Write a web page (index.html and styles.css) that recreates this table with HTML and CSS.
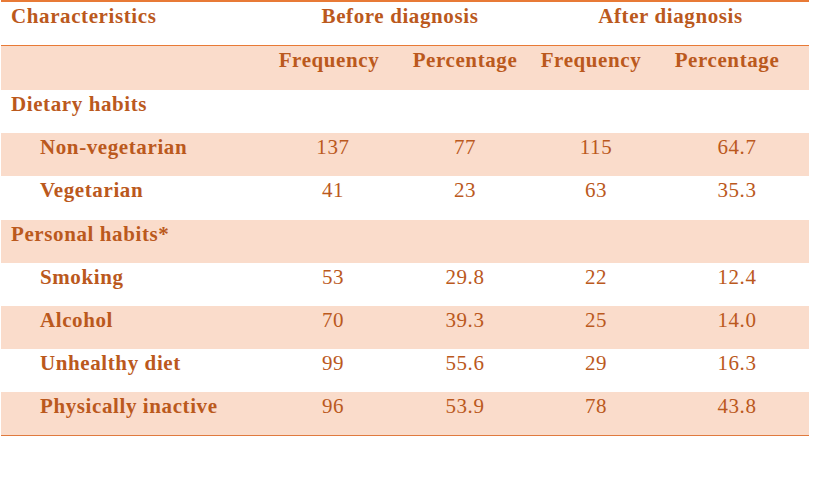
FILE: index.html
```html
<!DOCTYPE html>
<html>
<head>
<meta charset="utf-8">
<link rel="stylesheet" href="styles.css">
</head>
<body>
<div class="wrap">
<table class="tbl">
  <colgroup>
    <col class="c1"><col class="c2"><col class="c3"><col class="c4"><col class="c5">
  </colgroup>
  <tr class="top">
    <th class="lead">Characteristics</th>
    <th colspan="2">Before diagnosis</th>
    <th colspan="2">After diagnosis</th>
  </tr>
  <tr class="sub band r44">
    <th></th>
    <th>Frequency</th>
    <th>Percentage</th>
    <th>Frequency</th>
    <th>Percentage</th>
  </tr>
  <tr class="cat">
    <td colspan="5" class="lead">Dietary habits</td>
  </tr>
  <tr class="band">
    <td class="item">Non-vegetarian</td><td class="num">137</td><td class="num">77</td><td class="num">115</td><td class="num">64.7</td>
  </tr>
  <tr class="r44">
    <td class="item">Vegetarian</td><td class="num">41</td><td class="num">23</td><td class="num">63</td><td class="num">35.3</td>
  </tr>
  <tr class="cat band">
    <td colspan="5" class="lead">Personal habits*</td>
  </tr>
  <tr>
    <td class="item">Smoking</td><td class="num">53</td><td class="num">29.8</td><td class="num">22</td><td class="num">12.4</td>
  </tr>
  <tr class="band">
    <td class="item">Alcohol</td><td class="num">70</td><td class="num">39.3</td><td class="num">25</td><td class="num">14.0</td>
  </tr>
  <tr>
    <td class="item">Unhealthy diet</td><td class="num">99</td><td class="num">55.6</td><td class="num">29</td><td class="num">16.3</td>
  </tr>
  <tr class="band last">
    <td class="item">Physically inactive</td><td class="num">96</td><td class="num">53.9</td><td class="num">78</td><td class="num">43.8</td>
  </tr>
</table>
</div>
</body>
</html>
```
FILE: styles.css
```css
html, body {
  margin: 0;
  padding: 0;
  background: #ffffff;
}

.wrap {
  padding-left: 1px;
}

.tbl {
  width: 808px;
  table-layout: fixed;
  border-collapse: separate;
  border-spacing: 0;
  font-family: "Liberation Serif", "Times New Roman", serif;
  font-size: 21px;
  line-height: 24px;
  letter-spacing: 0.6px;
  color: #bb591d;
}

.c1 { width: 267px; }
.c2 { width: 130px; }
.c3 { width: 134px; }
.c4 { width: 123px; }
.c5 { width: 154px; }

.tbl th,
.tbl td {
  padding: 2px 0 0 0;
  vertical-align: top;
  text-align: center;
}

.tbl tr { height: 43px; }
.tbl tr.r44 { height: 44px; }

.tbl th { font-weight: bold; }

.tbl .lead {
  text-align: left;
  padding-left: 10px;
  font-weight: bold;
}

.tbl .item {
  text-align: left;
  padding-left: 39px;
  font-weight: bold;
}

.tbl .num { font-weight: normal; }

.tbl tr.top { height: 46px; }
.tbl tr.top th {
  border-top: 2px solid #e87a36;
  border-bottom: 1px solid #e87a36;
}

.tbl tr.band th,
.tbl tr.band td {
  background: #fadccb;
}

.tbl tr.last { height: 44px; }
.tbl tr.last td {
  border-bottom: 1px solid #e07a3e;
}

.sub th:nth-child(2) { padding-right: 8px; }
.sub th:nth-child(4) { padding-right: 5px; }
.sub th:nth-child(5) { padding-right: 10px; }

.tbl td.num:nth-child(4) { padding-left: 5px; }
.tbl td.num:nth-child(5) { padding-left: 10px; }
```
